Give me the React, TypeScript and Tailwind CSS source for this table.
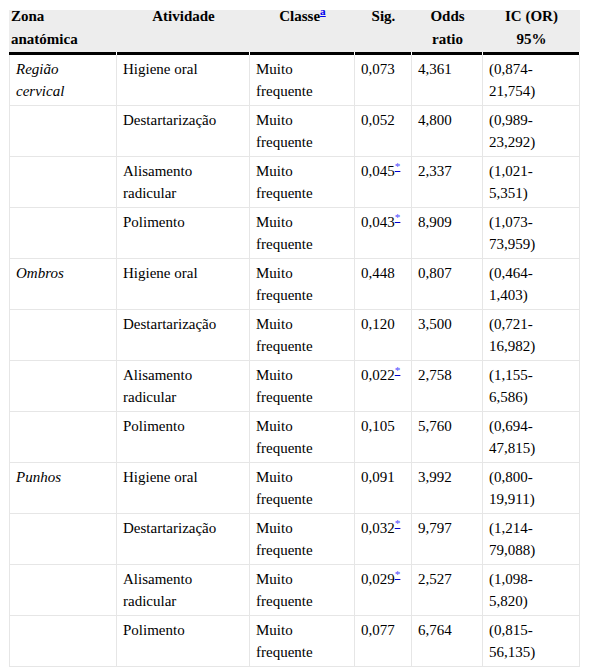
type Row = {
  zona?: string[];
  atividade: string[];
  sig: string;
  star?: boolean;
  odds: string;
  ic: [string, string];
};

const rows: Row[] = [
  { zona: ["Região", "cervical"], atividade: ["Higiene oral"], sig: "0,073", odds: "4,361", ic: ["(0,874-", "21,754)"] },
  { atividade: ["Destartarização"], sig: "0,052", odds: "4,800", ic: ["(0,989-", "23,292)"] },
  { atividade: ["Alisamento", "radicular"], sig: "0,045", star: true, odds: "2,337", ic: ["(1,021-", "5,351)"] },
  { atividade: ["Polimento"], sig: "0,043", star: true, odds: "8,909", ic: ["(1,073-", "73,959)"] },
  { zona: ["Ombros"], atividade: ["Higiene oral"], sig: "0,448", odds: "0,807", ic: ["(0,464-", "1,403)"] },
  { atividade: ["Destartarização"], sig: "0,120", odds: "3,500", ic: ["(0,721-", "16,982)"] },
  { atividade: ["Alisamento", "radicular"], sig: "0,022", star: true, odds: "2,758", ic: ["(1,155-", "6,586)"] },
  { atividade: ["Polimento"], sig: "0,105", odds: "5,760", ic: ["(0,694-", "47,815)"] },
  { zona: ["Punhos"], atividade: ["Higiene oral"], sig: "0,091", odds: "3,992", ic: ["(0,800-", "19,911)"] },
  { atividade: ["Destartarização"], sig: "0,032", star: true, odds: "9,797", ic: ["(1,214-", "79,088)"] },
  { atividade: ["Alisamento", "radicular"], sig: "0,029", star: true, odds: "2,527", ic: ["(1,098-", "5,820)"] },
  { atividade: ["Polimento"], sig: "0,077", odds: "6,764", ic: ["(0,815-", "56,135)"] },
];

function Lines({ items }: { items: string[] }) {
  return (
    <>
      {items.map((t, i) => (
        <span key={i}>
          {i > 0 && <br />}
          {t}
        </span>
      ))}
    </>
  );
}

function HeadCell({ children, left }: { children: React.ReactNode; left?: boolean }) {
  return (
    <th className="p-0 align-top font-bold">
      <div className={`flow-root h-[42px] bg-[#ededed] ${left ? "text-left pl-[2px]" : "text-center"}`}>
        <div className="-mt-[5px] leading-[23px]">{children}</div>
      </div>
      <div className="h-[3px] bg-black mr-px" />
    </th>
  );
}

const td = "align-top px-[6px] pt-[3px] pb-[3px] border-r border-b border-[#e6e6e6] leading-[22px]";

export default function App() {
  return (
    <div className="w-[590px] h-[671px] overflow-hidden bg-white text-black pt-[10px] pl-[9px] font-['Liberation_Serif'] text-[15px]">
      <table className="table-fixed w-[571px] border-separate border-spacing-0">
        <colgroup>
          <col className="w-[108px]" />
          <col className="w-[133px]" />
          <col className="w-[105px]" />
          <col className="w-[57px]" />
          <col className="w-[71px]" />
          <col className="w-[97px]" />
        </colgroup>
        <thead>
          <tr>
            <HeadCell left>
              Zona
              <br />
              anatómica
            </HeadCell>
            <HeadCell>Atividade</HeadCell>
            <HeadCell>
              Classe
              <sup>
                <a className="text-[#0000ee] underline">a</a>
              </sup>
            </HeadCell>
            <HeadCell>Sig.</HeadCell>
            <HeadCell>
              Odds
              <br />
              ratio
            </HeadCell>
            <HeadCell>
              IC (OR)
              <br />
              95%
            </HeadCell>
          </tr>
        </thead>
        <tbody>
          {rows.map((r, i) => (
            <tr key={i}>
              <td className={`${td} border-l italic`}>{r.zona && <Lines items={r.zona} />}</td>
              <td className={td}>
                <Lines items={r.atividade} />
              </td>
              <td className={td}>
                Muito
                <br />
                frequente
              </td>
              <td className={`${td} whitespace-nowrap`}>
                {r.sig}
                {r.star && (
                  <sup>
                    <a className="text-[#4a4aff] underline decoration-[#0000cc]">*</a>
                  </sup>
                )}
              </td>
              <td className={td}>{r.odds}</td>
              <td className={td}>
                <Lines items={r.ic} />
              </td>
            </tr>
          ))}
        </tbody>
      </table>
    </div>
  );
}
